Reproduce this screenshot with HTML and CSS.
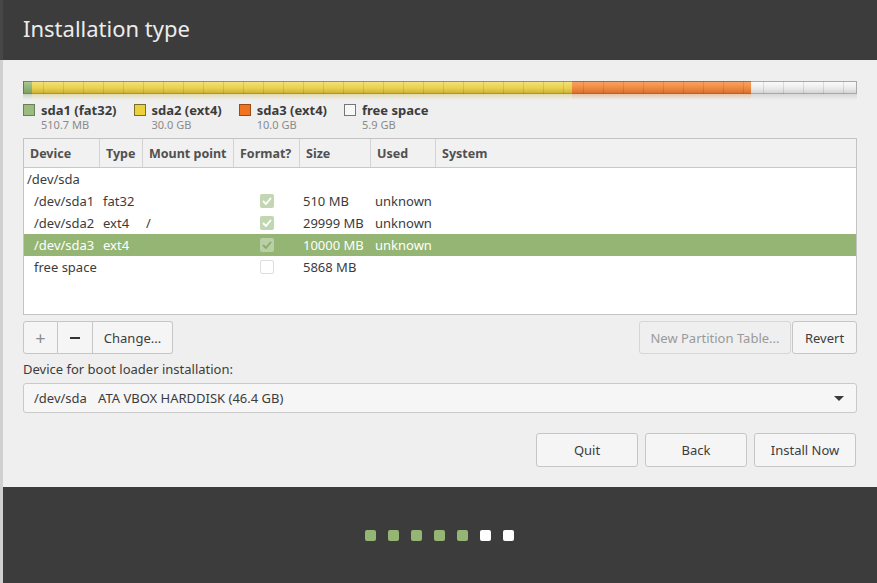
FILE: index.html
```html
<!DOCTYPE html>
<html lang="en">
<head>
<meta charset="utf-8">
<title>Installation type</title>
<link rel="stylesheet" href="styles.css">
</head>
<body>
<div class="edge"></div>
<div class="window">
  <header class="titlebar"><h1>Installation type</h1></header>
  <main class="content">
    <div class="bar">
      <div class="seg seg-green" style="width:9px"></div>
      <div class="seg seg-yellow" style="width:540px"></div>
      <div class="seg seg-orange" style="width:179px"></div>
      <div class="seg seg-free" style="flex:1"></div>
    </div>
    <div class="reflect">
      <div class="rseg r-green" style="width:9px"></div>
      <div class="rseg r-yellow" style="width:540px"></div>
      <div class="rseg r-orange" style="width:179px"></div>
      <div class="rseg r-free" style="flex:1"></div>
    </div>
    <div class="legend">
      <div class="legend-item">
        <span class="swatch sw-green"></span>
        <div class="legend-text"><div class="legend-name">sda1 (fat32)</div><div class="legend-size">510.7 MB</div></div>
      </div>
      <div class="legend-item">
        <span class="swatch sw-yellow"></span>
        <div class="legend-text"><div class="legend-name">sda2 (ext4)</div><div class="legend-size">30.0 GB</div></div>
      </div>
      <div class="legend-item">
        <span class="swatch sw-orange"></span>
        <div class="legend-text"><div class="legend-name">sda3 (ext4)</div><div class="legend-size">10.0 GB</div></div>
      </div>
      <div class="legend-item">
        <span class="swatch sw-free"></span>
        <div class="legend-text"><div class="legend-name">free space</div><div class="legend-size">5.9 GB</div></div>
      </div>
    </div>

    <div class="table">
      <div class="row head">
        <div class="hc">Device</div>
        <div class="hc">Type</div>
        <div class="hc">Mount point</div>
        <div class="hc">Format?</div>
        <div class="hc">Size</div>
        <div class="hc">Used</div>
        <div class="hc last">System</div>
      </div>
      <div class="tbody">
        <div class="row r">
          <div class="c dev0">/dev/sda</div><div class="c"></div><div class="c"></div><div class="c"></div><div class="c"></div><div class="c"></div><div class="c"></div>
        </div>
        <div class="row r">
          <div class="c dev">/dev/sda1</div><div class="c">fat32</div><div class="c"></div>
          <div class="c fmt"><span class="cb on"><svg viewBox="0 0 14 14" width="14" height="14"><polyline points="3.5,7.5 6,10 10.5,4.5" /></svg></span></div>
          <div class="c">510 MB</div><div class="c used">unknown</div><div class="c"></div>
        </div>
        <div class="row r">
          <div class="c dev">/dev/sda2</div><div class="c">ext4</div><div class="c">/</div>
          <div class="c fmt"><span class="cb on"><svg viewBox="0 0 14 14" width="14" height="14"><polyline points="3.5,7.5 6,10 10.5,4.5" /></svg></span></div>
          <div class="c">29999 MB</div><div class="c used">unknown</div><div class="c"></div>
        </div>
        <div class="row r sel">
          <div class="c dev">/dev/sda3</div><div class="c">ext4</div><div class="c"></div>
          <div class="c fmt"><span class="cb on"><svg viewBox="0 0 14 14" width="14" height="14"><polyline points="3.5,7.5 6,10 10.5,4.5" /></svg></span></div>
          <div class="c">10000 MB</div><div class="c used">unknown</div><div class="c"></div>
        </div>
        <div class="row r">
          <div class="c dev">free space</div><div class="c"></div><div class="c"></div>
          <div class="c fmt"><span class="cb off"></span></div>
          <div class="c">5868 MB</div><div class="c used"></div><div class="c"></div>
        </div>
      </div>
    </div>

    <div class="toolbar">
      <div class="group">
        <button class="btn gbtn sq dim">+</button>
        <button class="btn gbtn sq minus" aria-label="Remove"><span class="minus-bar"></span></button>
        <button class="btn gbtn change">Change...</button>
      </div>
      <div class="right-group">
        <button class="btn disabled npt">New Partition Table...</button>
        <button class="btn revert">Revert</button>
      </div>
    </div>

    <div class="label">Device for boot loader installation:</div>
    <div class="select">
      <span class="sel-dev">/dev/sda</span><span class="sel-name">ATA VBOX HARDDISK (46.4 GB)</span>
      <span class="arrow"></span>
    </div>

    <div class="actions">
      <button class="btn act">Quit</button>
      <button class="btn act">Back</button>
      <button class="btn act">Install Now</button>
    </div>
  </main>
  <footer class="footer">
    <div class="dots">
      <span class="dot g"></span><span class="dot g"></span><span class="dot g"></span><span class="dot g"></span><span class="dot g"></span><span class="dot w"></span><span class="dot w"></span>
    </div>
  </footer>
</div>
</body>
</html>
```

FILE: styles.css
```css
* { box-sizing: border-box; }
html, body { margin: 0; padding: 0; }
body {
  width: 877px;
  height: 583px;
  overflow: hidden;
  display: flex;
  font-family: "Noto Sans", "DejaVu Sans", sans-serif;
  font-size: 13px;
  color: #3c3c3c;
  background: #efefef;
}
.edge {
  width: 3px;
  flex: none;
  background: linear-gradient(to bottom, #474747 0 60px, #d0d0d0 60px 100%);
}
.window {
  flex: 1;
  display: flex;
  flex-direction: column;
  min-width: 0;
}
.titlebar {
  height: 60px;
  flex: none;
  background: #3c3c3c;
  padding: 12px 0 0 20px;
}
.titlebar h1 {
  margin: 0;
  font-weight: normal;
  font-size: 22px;
  line-height: 32px;
  color: #ececec;
}
.content {
  flex: 1;
  background: #efefef;
  padding: 21px 20px 0 20px;
  display: flex;
  flex-direction: column;
}

/* partition bar */
.bar {
  height: 13px;
  display: flex;
  position: relative;
}
.bar::after {
  content: "";
  position: absolute;
  inset: 0;
  background: repeating-linear-gradient(to right, rgba(0,0,0,0.10) 0 1px, transparent 1px 20px);
  pointer-events: none;
}
.seg { height: 13px; border-top: 1px solid; border-bottom: 1px solid; }
.seg-green { background: linear-gradient(#a7c78e, #8fb174 60%, #7e9f66); border-color: #6d8a58; border-left: 1px solid #6d8a58; }
.seg-yellow { background: linear-gradient(#f4e07a, #ead04e 55%, #cdb43a); border-color: #a89535; }
.seg-orange { background: linear-gradient(#f7a263, #f08a42 55%, #d5732f); border-color: #b8642a; }
.seg-free { background: linear-gradient(#fafafa, #ececec 55%, #d4d4d4); border-color: #a9a9a9; border-right: 1px solid #a9a9a9; }
.reflect { height: 6px; display: flex; }
.rseg { height: 6px; }
.r-green { background: linear-gradient(rgba(127,159,102,0.35), rgba(127,159,102,0)); }
.r-yellow { background: linear-gradient(rgba(205,180,58,0.35), rgba(205,180,58,0)); }
.r-orange { background: linear-gradient(rgba(213,115,47,0.35), rgba(213,115,47,0)); }
.r-free { background: linear-gradient(rgba(160,160,160,0.3), rgba(160,160,160,0)); }

/* legend */
.legend {
  margin-top: 3px;
  display: flex;
  gap: 17px;
}
.legend-item { display: flex; gap: 6px; align-items: flex-start; }
.swatch { width: 12px; height: 12px; margin-top: 1px; border: 1px solid; flex: none; }
.sw-green { background: #9abd7f; border-color: #6a7f5a; }
.sw-yellow { background: #ecd13e; border-color: #7a6c2a; }
.sw-orange { background: #f07320; border-color: #9a4a15; }
.sw-free { background: #f7f7f7; border-color: #777; }
.legend-name { font-weight: bold; font-size: 13px; line-height: 14px; color: #3c3c3c; }
.legend-size { font-size: 11px; line-height: 12px; margin-top: 2px; color: #8a8a8a; }

/* table */
.table {
  margin-top: 7px;
  height: 177px;
  border: 1px solid #c3c3c3;
  background: #fff;
  display: flex;
  flex-direction: column;
}
.row {
  display: grid;
  grid-template-columns: 76px 43px 91px 66px 71px 65px 1fr;
}
.head {
  height: 29px;
  background: #f1f1f1;
  border-bottom: 1px solid #c9c9c9;
}
.hc {
  font-weight: bold;
  font-size: 12.5px;
  color: #505050;
  padding-left: 6px;
  padding-top: 1px;
  line-height: 27px;
  border-right: 1px solid #d3d3d3;
  white-space: nowrap;
}
.hc.last { border-right: none; }
.tbody { flex: 1; }
.r { height: 22px; line-height: 22px; }
.c { padding-left: 3px; white-space: nowrap; }
.c.used { padding-left: 4px; }
.dev0 { padding-left: 3px; }
.dev { padding-left: 10px; }
.sel { background: #94b573; color: #fff; }
.fmt { display: flex; align-items: center; justify-content: center; padding-left: 0; padding-right: 1px; }
.cb {
  width: 14px; height: 14px; border-radius: 2px; display: block;
}
.cb svg { display: block; }
.cb polyline { fill: none; stroke: #fff; stroke-width: 1.8; stroke-linecap: round; stroke-linejoin: round; }
.cb.on { background: #c3d6b2; }
.sel .cb.on { background: #b9cfa5; }
.sel .cb polyline { stroke: #8aab6a; }
.cb.off { background: #fff; border: 1px solid #dedede; }

/* buttons */
.btn {
  font-family: inherit;
  font-size: 13px;
  color: #3c3c3c;
  background: #f5f5f5;
  border: 1px solid #c6c6c6;
  border-radius: 3px;
  padding: 0;
  margin: 0;
}
.toolbar {
  margin-top: 6px;
  height: 33px;
  display: flex;
  justify-content: space-between;
}
.group { display: flex; }
.gbtn { height: 33px; border-radius: 0; }
.gbtn + .gbtn { border-left: none; }
.gbtn:first-child { border-radius: 3px 0 0 3px; }
.gbtn:last-child { border-radius: 0 3px 3px 0; }
.sq { width: 35px; font-size: 18px; line-height: 1; }
.minus { display: flex; align-items: center; justify-content: center; }
.minus-bar { display: block; width: 10px; height: 2px; background: #333; }
.dim { color: #8c8c8c; }
.change { width: 80px; }
.right-group { display: flex; gap: 1px; }
.npt { width: 152px; height: 33px; color: #9a9a9a; background: #efefef; border-color: #d6d6d6; }
.revert { width: 65px; height: 33px; }

.label {
  margin-top: 7px;
  line-height: 16px;
}
.select {
  margin-top: 6px;
  height: 30px;
  border: 1px solid #c9c9c9;
  border-radius: 3px;
  background: #f6f6f6;
  display: flex;
  align-items: center;
  padding-left: 10px;
  position: relative;
}
.sel-dev { width: 64px; }
.arrow {
  margin-left: auto;
  margin-right: 12px;
  width: 0; height: 0;
  border-left: 5px solid transparent;
  border-right: 5px solid transparent;
  border-top: 5px solid #3a3a3a;
}

.actions {
  margin-top: 20px;
  display: flex;
  justify-content: flex-end;
  gap: 7px;
  padding-right: 1px;
}
.act { width: 102px; height: 34px; }

/* footer */
.footer {
  height: 96px;
  flex: none;
  background: #3c3c3c;
  display: flex;
  align-items: center;
  justify-content: center;
}
.dots { display: flex; gap: 12px; margin-left: -1px; }
.dot { width: 11px; height: 11px; border-radius: 2px; display: block; }
.dot.g { background: #94b573; }
.dot.w { background: #ffffff; }
```
